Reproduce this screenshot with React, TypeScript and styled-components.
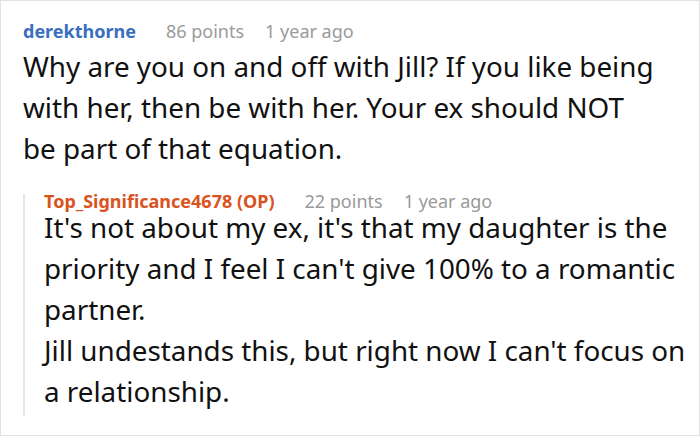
import React from "react";
import styled, { createGlobalStyle } from "styled-components";

const GlobalStyle = createGlobalStyle`
    html, body {
        margin: 0;
        padding: 0;
        background: #ffffff;
    }
    body {
        font-family: "Noto Sans", "Open Sans", sans-serif;
    }
`;

const Thread = styled.div`
    box-sizing: border-box;
    width: 700px;
    height: 436px;
    border: 1px solid #e2e2e2;
    padding: 23px 8px 0 22px;
    overflow: hidden;
`;

const Comment = styled.div`
    display: flex;
    flex-direction: column;
`;

const Meta = styled.div`
    display: flex;
    align-items: center;
    height: 14px;
    line-height: 14px;
    white-space: nowrap;
`;

const Author = styled.span<{ $op?: boolean }>`
    font-size: 18px;
    font-weight: 700;
    color: ${(props) => (props.$op ? "#d9531e" : "#3a6fbf")};
    margin-right: 30px;
`;

const Info = styled.span`
    font-size: 18px;
    color: #9a9a9a;
    margin-right: 21px;
`;

const Body = styled.div<{ $gap: number; $inset: number }>`
    margin-top: ${(props) => props.$gap}px;
    padding-right: ${(props) => props.$inset}px;
    font-size: 27.8px;
    line-height: 41px;
    color: #111111;
`;

const Replies = styled.div`
    margin-top: 31px;
    border-left: 2px solid #e4e4e4;
    padding: 0 0 4px 19px;
`;

const Reply = styled(Comment)`
    margin-top: -6px;
`;

export default function App() {
    return (
        <>
            <GlobalStyle />
            <Thread>
                <Comment>
                    <Meta>
                        <Author>derekthorne</Author>
                        <Info>86 points</Info>
                        <Info>1 year ago</Info>
                    </Meta>
                    <Body $gap={8} $inset={30}>
                        Why are you on and off with Jill? If you like being with her, then be
                        with her. Your ex should NOT be part of that equation.
                    </Body>
                </Comment>
                <Replies>
                    <Reply>
                        <Meta>
                            <Author $op>Top_Significance4678 (OP)</Author>
                            <Info>22 points</Info>
                            <Info>1 year ago</Info>
                        </Meta>
                        <Body $gap={-1} $inset={0}>
                            It's not about my ex, it's that my daughter is the priority and I
                            feel I can't give 100% to a romantic partner.
                            <br />
                            Jill undestands this, but right now I can't focus on a relationship.
                        </Body>
                    </Reply>
                </Replies>
            </Thread>
        </>
    );
}
